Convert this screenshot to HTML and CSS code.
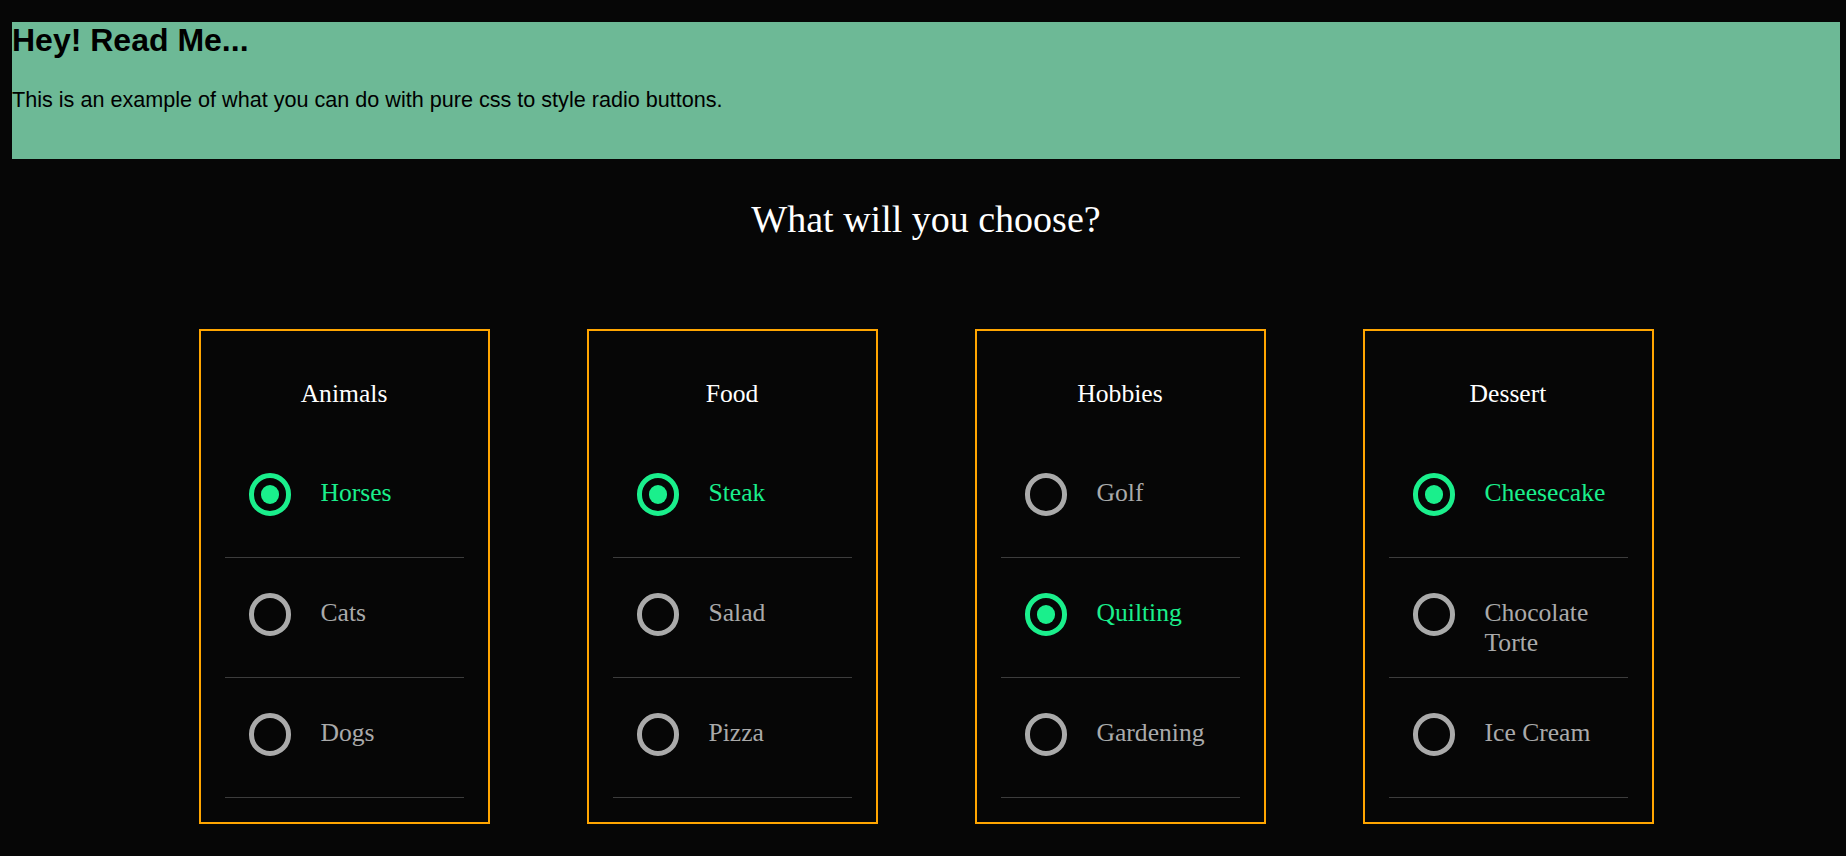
FILE: index.html
```html
<!DOCTYPE html>
<html lang="en">
<head>
<meta charset="utf-8">
<title>Radio buttons</title>
<link rel="stylesheet" href="styles.css">
</head>
<body>
<div class="page">
  <div class="banner">
    <h2 class="banner-title">Hey! Read Me...</h2>
    <p class="banner-text">This is an example of what you can do with pure css to style radio buttons.</p>
  </div>

  <h1 class="title">What will you choose?</h1>

  <div class="cards">
    <div class="card">
      <h3 class="card-title">Animals</h3>
      <label class="option"><input type="radio" name="animals" checked><span class="radio"></span><span class="text">Horses</span></label>
      <label class="option"><input type="radio" name="animals"><span class="radio"></span><span class="text">Cats</span></label>
      <label class="option"><input type="radio" name="animals"><span class="radio"></span><span class="text">Dogs</span></label>
    </div>
    <div class="card">
      <h3 class="card-title">Food</h3>
      <label class="option"><input type="radio" name="food" checked><span class="radio"></span><span class="text">Steak</span></label>
      <label class="option"><input type="radio" name="food"><span class="radio"></span><span class="text">Salad</span></label>
      <label class="option"><input type="radio" name="food"><span class="radio"></span><span class="text">Pizza</span></label>
    </div>
    <div class="card">
      <h3 class="card-title">Hobbies</h3>
      <label class="option"><input type="radio" name="hobbies"><span class="radio"></span><span class="text">Golf</span></label>
      <label class="option"><input type="radio" name="hobbies" checked><span class="radio"></span><span class="text">Quilting</span></label>
      <label class="option"><input type="radio" name="hobbies"><span class="radio"></span><span class="text">Gardening</span></label>
    </div>
    <div class="card">
      <h3 class="card-title">Dessert</h3>
      <label class="option"><input type="radio" name="dessert" checked><span class="radio"></span><span class="text">Cheesecake</span></label>
      <label class="option"><input type="radio" name="dessert"><span class="radio"></span><span class="text">Chocolate Torte</span></label>
      <label class="option"><input type="radio" name="dessert"><span class="radio"></span><span class="text">Ice Cream</span></label>
    </div>
  </div>
</div>
</body>
</html>
```
FILE: styles.css
```css
html, body {
  margin: 0;
  padding: 0;
  background: #060606;
}

body {
  font-family: "Liberation Serif", "Times New Roman", serif;
  color: #fff;
}

.page {
  padding: 22px 6px 0 12px;
}

.banner {
  background: #6db996;
  height: 137px;
  box-sizing: border-box;
  font-family: "Liberation Sans", Arial, sans-serif;
  color: #000;
}

.banner-title {
  margin: 0 0 27.5px;
  font-size: 32px;
  font-weight: bold;
}

.banner-text {
  margin: 0;
  font-size: 21.6px;
}

.title {
  margin: 38px 0 0;
  font-size: 38px;
  font-weight: normal;
  text-align: center;
  color: #fff;
}

.cards {
  display: flex;
  justify-content: center;
  gap: 97px;
  margin-top: 87.5px;
}

.card {
  width: 291px;
  box-sizing: border-box;
  border: 2px solid #ffa500;
  padding: 0 24px 24px;
}

.card-title {
  margin: 48px 0 29.5px;
  font-size: 25.6px;
  font-weight: normal;
  text-align: center;
  color: #fff;
}

.option {
  display: flex;
  align-items: flex-start;
  height: 120px;
  box-sizing: border-box;
  padding-top: 35px;
  border-bottom: 1px solid #3c3c3c;
  cursor: pointer;
}

.option input {
  display: none;
}

.radio {
  flex: none;
  width: 42.5px;
  height: 42.5px;
  box-sizing: border-box;
  margin-left: 24px;
  border: 5.5px solid #aaa;
  border-radius: 50%;
  display: flex;
  align-items: center;
  justify-content: center;
}

.text {
  margin: 5px 0 0 29.5px;
  font-size: 25.6px;
  color: #aaa;
  flex: 1;
}

.option input:checked + .radio {
  border-color: #1aef8c;
}

.option input:checked + .radio::after {
  content: "";
  width: 18.5px;
  height: 18.5px;
  border-radius: 50%;
  background: #1aef8c;
}

.option input:checked ~ .text {
  color: #1aef8c;
}
```
